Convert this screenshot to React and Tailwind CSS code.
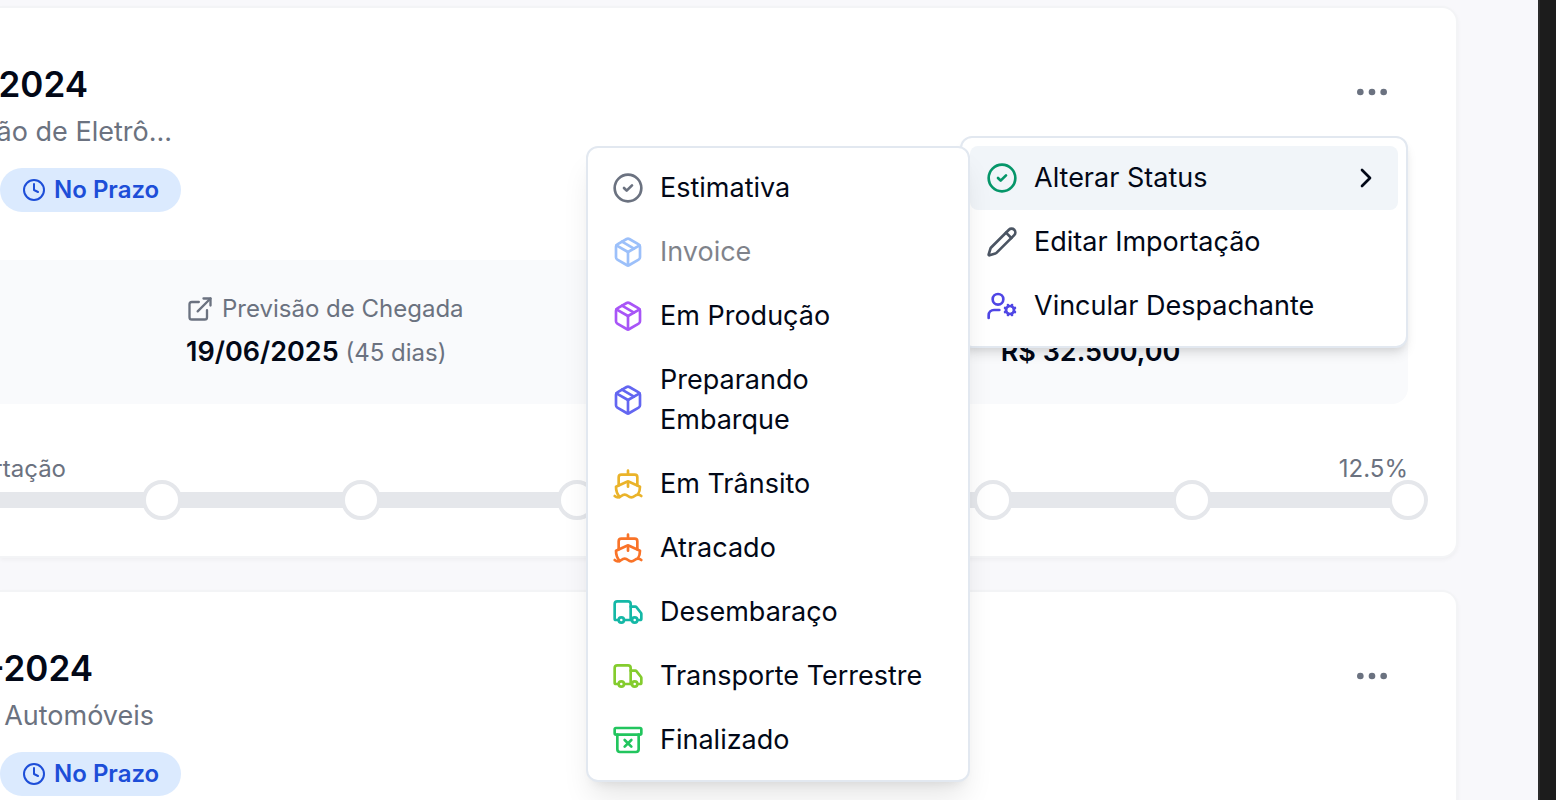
import {
  ArchiveX, ChevronRight, CircleCheck, Clock, Ellipsis, ExternalLink,
  Package, Pencil, Ship, Truck, UserCog,
} from "lucide-react";

const statuses = [
  { label: "Estimativa", Icon: CircleCheck, color: "text-[#6b7280]" },
  { label: "Invoice", Icon: Package, color: "text-[#3b82f6]", disabled: true },
  { label: "Em Produção", Icon: Package, color: "text-[#a855f7]" },
  { label: "Preparando Embarque", Icon: Package, color: "text-[#6366f1]" },
  { label: "Em Trânsito", Icon: Ship, color: "text-[#eab32a]" },
  { label: "Atracado", Icon: Ship, color: "text-[#f97328]" },
  { label: "Desembaraço", Icon: Truck, color: "text-[#14b8a6]" },
  { label: "Transporte Terrestre", Icon: Truck, color: "text-[#84cc2e]" },
  { label: "Finalizado", Icon: ArchiveX, color: "text-[#22c55e]" },
];

function MenuItem({ Icon, label, color, disabled, active, submenu }) {
  return (
    <button
      type="button"
      role="menuitem"
      disabled={disabled}
      aria-haspopup={submenu ? "menu" : undefined}
      aria-expanded={submenu ? true : undefined}
      className={`flex w-full items-center gap-4 rounded-lg px-4 py-3 text-left text-[27px] leading-10 disabled:opacity-50 ${active ? "bg-[#f1f5f9]" : ""}`}
    >
      <Icon className={`size-8 shrink-0 ${color}`} />
      <span className="flex-1">{label}</span>
      {submenu && <ChevronRight className="size-8 shrink-0" />}
    </button>
  );
}

function ActionsMenu() {
  return (
    <div
      role="menu"
      className="absolute top-full right-0 z-10 mt-2 w-[448px] rounded-xl border-2 border-[#e2e8f0] bg-white p-2 shadow-[0_8px_12px_-2px_rgba(0,0,0,0.1),0_4px_8px_-4px_rgba(0,0,0,0.1)]"
    >
      <div className="relative">
        <MenuItem Icon={CircleCheck} label="Alterar Status" color="text-[#059669]" active submenu />
        <div
          role="menu"
          aria-label="Alterar Status"
          className="absolute top-0 right-full w-96 rounded-xl border-2 border-[#e2e8f0] bg-white p-2 shadow-[0_20px_30px_-6px_rgba(0,0,0,0.1),0_8px_12px_-8px_rgba(0,0,0,0.1)]"
        >
          {statuses.map((s) => (
            <MenuItem key={s.label} {...s} />
          ))}
        </div>
      </div>
      <MenuItem Icon={Pencil} label="Editar Importação" color="text-[#4b5563]" />
      <MenuItem Icon={UserCog} label="Vincular Despachante" color="text-[#4f46e5]" />
    </div>
  );
}

function CardHeader({ title, titleWidth, subtitle, subtitleWidth, menuOpen }) {
  return (
    <header className="flex items-start justify-between">
      <div className="flex flex-col items-start whitespace-nowrap">
        <h2 className={`flex justify-end text-[35px] leading-[56px] font-semibold ${titleWidth}`}>{title}</h2>
        <p className={`flex justify-end text-[27px] leading-10 text-[#6b7280] ${subtitleWidth}`}>{subtitle}</p>
        <span className="mt-4 flex h-11 items-center gap-2 rounded-full bg-[#dbeafe] px-[22px] text-2xl font-semibold text-[#1d4ed8]">
          <Clock className="size-6" />
          No Prazo
        </span>
      </div>
      <div className="relative">
        <button type="button" aria-label="Ações" className="flex size-[72px] items-center justify-center text-[#6b7280]">
          <Ellipsis className="size-10" />
        </button>
        {menuOpen && <ActionsMenu />}
      </div>
    </header>
  );
}

function Progress() {
  return (
    <section className="mt-12">
      <div className="flex justify-between text-2xl leading-[34px] text-[#6b7280]">
        <span className="flex w-[66px] justify-end">rtação</span>
        <span>12.5%</span>
      </div>
      <ol className="mt-1.5 grid grid-cols-[162fr_199fr_216fr_200fr_216fr_199fr_216fr] grid-rows-[16px] items-center bg-[#e5e7eb]">
        {[1, 2, 3, 4, 5, 6, 7].map((n) => (
          <li key={n} className="-mr-5 size-10 justify-self-end rounded-full border-4 border-[#e5e7eb] bg-white" />
        ))}
      </ol>
    </section>
  );
}

function Card({ children }) {
  return (
    <article className="rounded-r-2xl border-2 border-l-0 border-[#f3f4f6] bg-white py-12 pr-12 shadow-[0_2px_4px_0_rgba(0,0,0,0.04)]">
      {children}
    </article>
  );
}

export default function App() {
  return (
    <div className="flex h-screen overflow-hidden bg-[#f8f8fb] font-['Inter',sans-serif] text-[#020817]">
      <main className="flex flex-1 flex-col gap-8 pt-1.5 pr-20">
        <Card>
          <CardHeader title="2024" titleWidth="w-[88px]" subtitle="ão de Eletrô..." subtitleWidth="w-[172px]" menuOpen />
          <section className="mt-12 grid grid-cols-3 rounded-r-2xl bg-[#f9fafc] py-8 pl-[186px]">
            <div>
              <p className="flex items-center gap-2 text-2xl leading-[34px] text-[#6b7280]">
                <ExternalLink className="size-7" />
                Previsão de Chegada
              </p>
              <p className="mt-1.5 text-[27px] leading-10 font-semibold">
                19/06/2025 <span className="text-2xl font-normal text-[#6b7280]">(45 dias)</span>
              </p>
            </div>
            <p className="col-start-3 self-end text-[27px] leading-10 font-semibold">R$ 32.500,00</p>
          </section>
          <Progress />
        </Card>
        <Card>
          <CardHeader title="-2024" titleWidth="w-[93px]" subtitle="Automóveis" subtitleWidth="w-[154px]" />
        </Card>
      </main>
      <aside className="w-[18px] border-l-2 border-[#2b2b2b] bg-[#1c1c1c]" />
    </div>
  );
}
